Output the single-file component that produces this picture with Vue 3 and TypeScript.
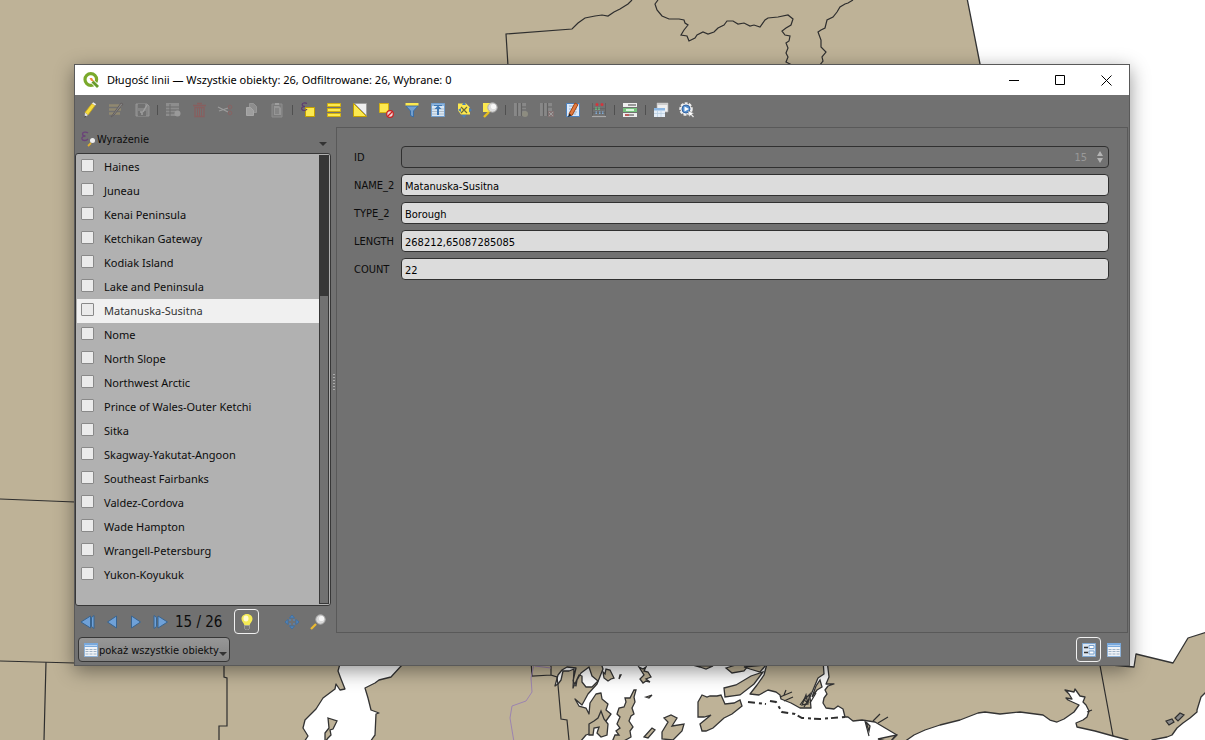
<script setup lang="ts">
import { ref } from 'vue'

interface Tool { name: string; art?: string; dim?: boolean }

const yellow = '#fce94f'
const art: Record<string, string> = {
  pencil: `<path d="M3 10.5 10 1.5l3 2L6 13z" fill="#f5dc3c" stroke="#c9a61c" stroke-width=".8"/><path d="M10 1.5 11.2.3l3 1.9L13 3.5z" fill="#eee"/><path d="M3 10.5 6 13l-3.5 2.6z" fill="#ddd"/><path d="m2.8 13.5-.6 2.3 2-1z" fill="#333"/>`,
  multi: `<path d="M1 3.500h13M1 7.500h12M1 11.500h11" stroke="#b0a070" stroke-width="2.500"/><path d="M3 15 13 1l2 1L6 13z" fill="#999" stroke="#594f4f"/>`,
  save: `<path d="M2 2h11l2 2v10H2z" fill="#999" stroke="#bbb"/><path d="M4 2h7v4H4zM4 9h8v5H4z" fill="#717171"/><path d="M6 10h2v3M9 10l4-7" stroke="#ccc" stroke-width="1.500" fill="none"/>`,
  addrow: `<path d="M1 1h13v13H1z" fill="#aaa"/><path d="M1 5h13M1 8h13M1 11h13M5 2v12" stroke="#666"/><circle cx="12.500" cy="11.500" r="3" fill="#c4c4c4"/>`,
  trash: `<path d="M2 3.500h13M6 1.500h5" stroke="#9d4f4f" stroke-width="1.600"/><path d="M4 5.500h9v9H4z" fill="none" stroke="#9d4f4f" stroke-width="1.300"/><path d="M6.500 6v8M8.500 6v8M10.500 6v8" stroke="#9d4f4f"/>`,
  cut: `<path d="M1 5l10 5M2 9l9-3" stroke="#c5c5c5" stroke-width="1.300"/><circle cx="13" cy="5" r="1.800" fill="none" stroke="#a05555"/><circle cx="13" cy="11" r="1.800" fill="none" stroke="#a05555"/>`,
  copy: `<path d="M6.500 1.500h4l3 3v6h-7z" fill="#aaa" stroke="#bbb"/><path d="M3.500 5.500h4l3 3v5h-7z" fill="#ccc" stroke="#ddd"/>`,
  paste: `<path d="M3 2h10v13H3z" fill="#888" stroke="#aaa"/><path d="M5 4h5l2 2v7H5z" fill="#bbb"/><path d="M6 1h4v2H6z" fill="#ccc"/><path d="M6 7h4M6 9h4M6 11h4" stroke="#777"/>`,
  expr: `<path d="M5.500 5.500h9v9h-9z" fill="${yellow}" stroke="#c4a000"/><path d="M7 1.500C5 .3 2 1 2.200 2.800 2.300 4 4 4.500 5 4.500 3 4.500 1.300 5.500 1.700 7 2.300 9 6 9 7 7" fill="none" stroke="#5d3b72" stroke-width="1.200"/>`,
  all: `<path d="M1.500 1.500h13v3h-13zM1.500 6.500h13v3h-13zM1.500 11.500h13v3h-13z" fill="${yellow}" stroke="#d2b010"/>`,
  invert: `<path d="M1.500 1.500v13h13z" fill="${yellow}" stroke="#c4a000"/><path d="M2.500 1.500h12v12z" fill="#eee" stroke="#999" stroke-width=".8"/>`,
  deselect: `<path d="M1.500 1.500h9v9h-9z" fill="${yellow}" stroke="#d2b010"/><circle cx="12" cy="12" r="3.300" fill="#f0d8d8" stroke="#cc1f1f" stroke-width="1.200"/><path d="m10 14 4-4" stroke="#cc1f1f" stroke-width="1.200"/>`,
  filter: `<path d="M2 4h12L9.500 9v6l-3-1.500V9z" fill="#729fcf" stroke="#3b6ea5"/><path d="M1.500 1h13v2.500h-13z" fill="${yellow}"/>`,
  top: `<path d="M1.500 1.500h13v13h-13z" fill="#d9e8f6" stroke="#729fcf"/><path d="M2 2h12v2H2z" fill="#8fb6de"/><path d="M2 7h12M2 9.500h12M2 12h12" stroke="#b3bec9"/><path d="M8 3.500 4.500 7H7v6h2V7h2.500z" fill="#3f78b4"/><path d="M4 3.500h8" stroke="#3f78b4"/>`,
  pan: `<path d="M2 1.500h8l4 4v7H5l-3-4z" fill="${yellow}"/><path d="m8 0 2 3H6zM8 16l2.500-3h-5zM2 8l3-2v4zM16 8l-3-2.500v5z" fill="#4d7fb5"/><path d="m5 5 6 6M11 5l-6 6" stroke="#6b6a38" stroke-width="1.200"/>`,
  zoom: `<path d="M1 1h8v9H1z" fill="${yellow}"/><path d="m2 15 5-5" stroke="#e6bf20" stroke-width="2.400"/><circle cx="10.500" cy="5.500" r="4.700" fill="#dedede" stroke="#aaa"/><circle cx="11.500" cy="4.500" r="2.600" fill="#f7f7f7"/>`,
  newcol: `<path d="M1 1h12v13H1z" fill="#a0a0a0"/><path d="M4.500 1v13M8.500 1v13M9 5h4M9 8h4" stroke="#555" stroke-width="1.200"/><circle cx="12" cy="12" r="3" fill="#a9a890"/>`,
  delcol: `<path d="M1 1h12v13H1z" fill="#a0a0a0"/><path d="M4.500 1v13M8.500 1v13M9 5h4" stroke="#555" stroke-width="1.200"/><path d="M9 9h6v6H9z" fill="#957777"/><path d="m10 10 4 4M14 10l-4 4" stroke="#ccc"/>`,
  calc: `<path d="M1.500 1.500h13v13h-13z" fill="#dceafa" stroke="#4a80bd"/><path d="M4 4h7M4 7h8M4 10h8M4 12h7" stroke="#93afd0"/><path d="M4 12 10 1l3 1.500-6 11z" fill="#e27a3f" stroke="#a14513"/><path d="m3 15 1-3.500 2.500 2z" fill="#222"/>`,
  abacus: `<path d="M1.500 1v14M14.500 1v14" stroke="#606060"/><path d="M1 14.500h14" stroke="#aaa" stroke-width="1.200"/><circle cx="6" cy="2.500" r="1.500" fill="#d5343c"/><circle cx="11" cy="2.500" r="1.500" fill="#d5343c"/><path d="M4 5.500h2V8H4zM7 5.500h2V8H7z" fill="#6cbd82"/><path d="M4.500 9.500h1.500V12H4.500zM8 9.500h1.500V12H8zM11 9.500h1.500V12H11z" fill="#85b5e5"/><path d="M2 6.700h12M2 10.700h12" stroke="#555" stroke-width=".5"/>`,
  conditional: `<path d="M1 1h14v4H1zM1 6h14v4H1zM1 11h14v4H1z" fill="#eee"/><path d="M1 6h14v4H1z" fill="#78c27e"/><path d="M6 3h8M3 13h9" stroke="#444"/><path d="M4 8h8" stroke="#d9f5dc" stroke-width="2"/><path d="M3 13h4" stroke="#d22"/>`,
  dock: `<path d="M4 1h11v9H4z" fill="#eee" stroke="#aaa" stroke-width=".7"/><path d="M4 1h11v2H4z" fill="#ccc"/><path d="M1 6h11v9H1z" fill="#e5eef8"/><path d="M1 6h11v2.500H1z" fill="#8db8e4"/><path d="M1 11.500h11M4.500 9v6M8 9v6" stroke="#b5cbe0" stroke-width=".7"/>`,
  actions: `<circle cx="7" cy="7" r="5.500" fill="#dedede" stroke="#eee" stroke-width="2.500" stroke-dasharray="2.800 1.200"/><circle cx="7" cy="7" r="4" fill="#5590cf" stroke="#3464a4"/><path d="M5.500 4.500v5L10 7z" fill="#fff"/><path d="m9 9 1.500 6 1.300-2 2.200 2.500 1-1-2.200-2.300 2.200-1z" fill="#fff" stroke="#777" stroke-width=".4"/>`,
  bulb: `<path d="M8 0C4.500 0 2.500 2.400 2.500 5c0 2.500 2.500 4 3 6.500h5c.5-2.500 3-4 3-6.500 0-2.600-2-5-5.500-5z" fill="#f4ea55"/><ellipse cx="7" cy="4.500" rx="2.500" ry="3" fill="#fffbd0"/><path d="M5.500 11.500h5v3l-1.500 1.500H7l-1.500-1.500z" fill="#777" stroke="#aaa" stroke-width=".7"/>`,
  move: `<path d="m8 1 2.500 3h-5zM8 15l2.500-3h-5zM1 8l3-2.500v5zM15 8l-3-2.500v5z" fill="#5588be" stroke="#416f9f"/><path d="M5 5h2v2H5zM9 5h2v2H9zM5 9h2v2H5zM9 9h2v2H9z" fill="#5e7da0"/>`,
  lens: `<path d="m1 15 5-5" stroke="#e9b932" stroke-width="2.300"/><circle cx="10.500" cy="5.500" r="4.700" fill="#d9d9d9" stroke="#aaa"/><circle cx="11.500" cy="4.500" r="2.600" fill="#f5f5f5"/>`,
  table: `<path d="M1.500 1.500h13v13h-13z" fill="#f0f3f7" stroke="#8fb3d9"/><path d="M1 1h14v4H1z" fill="#79a9dd"/><path d="M2 3.500h12" stroke="#b9d3ef"/><path d="M2.500 7.500h3M6.500 7.500h3M10.500 7.500h3M2.500 9.500h3M6.500 9.500h3M10.500 9.500h3M2.500 12h3M6.500 12h3M10.500 12h3" stroke="#9fb2c6"/>`,
  form: `<path d="M1.500 1.500h13v13h-13z" fill="#dce6f1" stroke="#7fa8d3"/><path d="M3 5.500h4M3 10.500h4" stroke="#333" stroke-width="1.300"/><path d="M8 3.500h5v3H8zM8 9h5v3H8z" fill="#fff" stroke="#79a1cd"/>`,
  first: `<path d="M10.500 2v12L1 8z" fill="#6fa1d8" stroke="#39648f"/><path d="M14 1.500v13l-2.500-2v-9z" fill="#6fa1d8" stroke="#39648f"/>`,
  prev: `<path d="M12.500 2v12L3.500 8z" fill="#6fa1d8" stroke="#39648f"/>`,
  next: `<path d="M3.500 2v12l9-6z" fill="#6fa1d8" stroke="#39648f"/>`,
  last: `<path d="M6 2v12l9.500-6z" fill="#6fa1d8" stroke="#39648f"/><path d="M2 1.500v13l2.500-2v-9z" fill="#6fa1d8" stroke="#39648f"/>`,
}

const tools: Tool[] = [
  { name: 'Edycja', art: 'pencil' }, { name: 'Multiedycja', art: 'multi', dim: true }, { name: 'Zapisz', art: 'save', dim: true },
  { name: '|' },
  { name: 'Dodaj obiekt', art: 'addrow', dim: true }, { name: 'Usuń', art: 'trash', dim: true }, { name: 'Wytnij', art: 'cut', dim: true }, { name: 'Kopiuj', art: 'copy', dim: true }, { name: 'Wklej', art: 'paste', dim: true },
  { name: '|' },
  { name: 'Wybierz wyrażeniem', art: 'expr' }, { name: 'Zaznacz wszystko', art: 'all' }, { name: 'Odwróć wybór', art: 'invert' }, { name: 'Odznacz', art: 'deselect' }, { name: 'Filtruj', art: 'filter' }, { name: 'Przenieś na górę', art: 'top' }, { name: 'Przesuń mapę', art: 'pan' }, { name: 'Powiększ', art: 'zoom' },
  { name: '|' },
  { name: 'Nowe pole', art: 'newcol', dim: true }, { name: 'Usuń pole', art: 'delcol', dim: true }, { name: 'Kalkulator pól', art: 'calc' }, { name: 'Statystyki', art: 'abacus' },
  { name: '|' },
  { name: 'Formatowanie warunkowe', art: 'conditional' },
  { name: '|' },
  { name: 'Zadokuj', art: 'dock' }, { name: 'Akcje', art: 'actions' },
]

const boroughs = ['Haines', 'Juneau', 'Kenai Peninsula', 'Ketchikan Gateway', 'Kodiak Island', 'Lake and Peninsula', 'Matanuska-Susitna', 'Nome', 'North Slope', 'Northwest Arctic', 'Prince of Wales-Outer Ketchi', 'Sitka', 'Skagway-Yakutat-Angoon', 'Southeast Fairbanks', 'Valdez-Cordova', 'Wade Hampton', 'Wrangell-Petersburg', 'Yukon-Koyukuk']
const current = ref('Matanuska-Susitna')
const fields = ref([
  { label: 'NAME_2', value: 'Matanuska-Susitna' },
  { label: 'TYPE_2', value: 'Borough' },
  { label: 'LENGTH', value: '268212,65087285085' },
  { label: 'COUNT', value: '22' },
])
const nav = [['Pierwszy', 'first'], ['Poprzedni', 'prev'], ['Następny', 'next'], ['Ostatni', 'last']]
</script>

<template>
  <main class="desktop">
    <svg class="map" viewBox="0 0 1205 740" preserveAspectRatio="xMidYMid slice" aria-hidden="true">
      <g class="sea">
        <path d="M967-2 980 64 1100 664 1134 667 1136 654 1173 663 1188 638 1207 632V-2z" />
        <path d="M341 660 338 671 341 679 345 689 340 690 336 684 335 689 323 698 316 709 305 720 303 728 308 736 304 742H370L375 735 376 714 379 713 371 710 368 698 365 688 375 683 379 680 391 677 402 665V660z" />
        <path d="M600 660 603 669 597 684 588 694 582 705 575 699 579 706 586 708 589 714 590 703 596 694 601 693 602 699 608 704 606 710 611 714 606 721 600 718 597 723 590 726 592 733 586 735 580 742H890L897 735 875 722 862 720 853 721 848 717 845 717 843 709 838 706 834 709 826 708 823 703 824 698 827 694 825 690 828 686 834 684 826 684 829 677 827 660H823L824 674 818 678 813 690 810 697 811 708 800 708 791 703 781 699 780 695 776 692 768 690 759 695 750 694 757 685 764 675 768 660z" />
        <path d="M558 675 562 670 567 667 576 668 573 681 576 686 577 680 581 673 589 667 592 676 598 681 592 687 586 687 582 682 582 676 579 675 573 688 574 669 569 671 563 671 561 680 558 684 555 686z" />
        <path d="M904 742 914 735 925 730 940 725 960 720 978 713 985 712 1000 714 1020 712 1043 715 1050 720 1057 722 1064 719 1074 712 1079 705 1068 700 1066 698 1072 699 1069 694 1065 690 1074 692 1075 689 1080 696 1085 697 1083 702 1086 705 1089 711 1087 717 1083 720 1076 723 1077 727 1095 731 1113 736 1128 740V742z" />
        <path d="M1207 691 1201 697 1197 710 1197 712 1190 718 1183 723 1177 728 1172 735 1167 737 1152 740V742H1207z" />
      </g>
      <g class="isle">
        <path d="M328 718 337 721 333 729 330 730 331 735 328 738 325 742 325 733 329 728z" />
        <path d="M603 672 605 674 606 669 610 670 612 674 614 678 611 679 608 681 604 678zM620 675 621 675 619 679zM639 667 643 669 646 667 644 671 648 672 651 677 646 679 650 682 646 681 643 683 640 679 644 675zM693 665 713 666 706 669 700 667z" />
        <path d="M726 668 736 665 749 665 744 671 732 673zM744 667 766 665 760 672 750 669zM724 688 736 685 751 676 763 672 754 684 740 695 725 697zM698 702 702 695 707 697 710 696 717 696 721 695 725 704 734 703 740 700 742 706 732 714 724 718 713 728 706 731 702 731 700 724 711 715 704 717 698 717z" />
        <path d="M634 690 636 690 634 697 635 702 632 708 634 714 631 716 629 721 633 727 630 731 631 737 622 742H612L615 735 619 735 616 731 620 728 617 724 620 717 617 714 619 708 624 707 626 702 625 698 630 698zM644 737 652 728 655 730 648 738zM662 732 668 722 664 718 671 715 677 718 672 726 684 724 682 731 673 740 662 739zM646 697 652 695 649 698z" />
        <path d="M589 724 594 721 598 718 601 711 604 719 608 724 607 735 601 737 597 733 599 727 594 728 593 735 589 735z" />
        <path d="M812 697 816 686 820 680 822 687 817 690zM802 705 806 695 808 704zM804 700 810 694 808 703zM866 722 870 726 869 731zM878 739 896 735 890 742z" />
      </g>
      <g class="border">
        <path d="M632 0 628 4 620 9 614 12 608 16 602 15 595 16 585 18 578 23 572 29 506 34 508 66" />
        <path d="M658 0 655 4 657 10 662 16 669 19 679 19 684 20 685 23 688 25 684 30 681 35 687 36 689 41 695 38 697 35 703 32 708 34 714 32 718 28 724 25 727 21 733 21 738 24 744 23 750 26 754 25 760 27 765 20 768 18 778 17 788 15 793 19 791 25 786 28 782 31 785 35 790 36 789 41 786 43 788 48 786 53 788 57 786 62 792 65" />
        <path d="M853 0 848 3 845 4 840 7 837 12 833 17 827 20 825 28 821 30 818 32 821 40 821 47 826 52 822 57 823 61 819 66" />
        <path d="M0 499 75 502M0 661 75 663M46 662 44 740M224 660V677L227 678V726H219V740M531 660 532 676 551 675M551 660V675L557 677 558 685 561 719 567 720 569 740M1099 660 1113 736" />
        <path class="dashes" d="M748 702 766 704M770 701 776 702 782 712 795 714 802 718 820 719 845 717" />
        <path d="M780 697 792 692M784 701 793 697M784 695 786 690M873 721 880 714M878 723 888 717M1087 712 1092 710M865 721 869 736M810 703 816 693M800 705 805 698M804 707 809 699" />
        <path class="lake" d="M1166 721 1172 719 1174 722 1169 725zM1175 718 1180 713 1184 715 1178 721z" />
      </g>
      <path class="river" d="M535 660 531 678 532 692 526 701 512 706 510 718 514 742M535 666 551 668" />
    </svg>

    <section class="window">
      <header class="titlebar">
        <svg class="logo" viewBox="0 0 16 16" aria-hidden="true">
          <circle cx="7.800" cy="7.500" r="5.800" fill="none" stroke="#7aa92b" stroke-width="3.200" />
          <path d="m10 10 5 5" stroke="#fff" stroke-width="4.500" /><path d="m9.500 9.500 5.500 5.500" stroke="#679a29" stroke-width="2.800" />
          <path d="M6.500 6h2.500l2 3.500-3-.8z" fill="#f28a35" />
        </svg>
        <h1>Długość linii — Wszystkie obiekty: 26, Odfiltrowane: 26, Wybrane: 0</h1>
        <button class="caption" aria-label="Minimalizuj"><svg viewBox="0 0 11 11"><path d="M0 5.500h10" /></svg></button>
        <button class="caption" aria-label="Maksymalizuj"><svg viewBox="0 0 11 11"><path d="M.5.500h9v9h-9z" /></svg></button>
        <button class="caption" aria-label="Zamknij"><svg viewBox="0 0 11 11"><path d="m.5.500 10 10M10.500.500l-10 10" /></svg></button>
      </header>

      <div class="toolbar" role="toolbar">
        <template v-for="(t, i) in tools" :key="i">
          <button v-if="t.art" class="tool" :class="{ dim: t.dim }" :aria-label="t.name" :disabled="t.dim">
            <svg class="icon" viewBox="0 0 16 16" v-html="art[t.art]" />
          </button>
          <span v-else class="divider" />
        </template>
      </div>

      <div class="body">
        <aside class="side">
          <button class="expression">
            <svg class="icon" viewBox="0 0 16 16" aria-hidden="true">
              <path d="M7 2C5 .5 1.500 1 1.500 3c0 1.500 1.500 2 3 2C2.500 5 .5 6 1 8c.6 2 4.500 2 6 0" fill="none" stroke="#6b4379" stroke-width="1.300" />
              <path d="m7 15 3-3" stroke="#e0b030" stroke-width="1.800" /><circle cx="11.500" cy="9.500" r="2.500" fill="#eee" />
            </svg>
            <span>Wyrażenie</span>
            <i class="caret" />
          </button>
          <div class="listbox">
            <ul>
              <li v-for="b in boroughs" :key="b" :class="{ on: b === current }" @click="current = b">
                <label><input type="checkbox" @click.stop /><span>{{ b }}</span></label>
              </li>
            </ul>
            <div class="scroll"><div class="thumb" /></div>
          </div>
          <div class="nav">
            <button v-for="n in nav" :key="n[0]" class="step" :aria-label="n[0]"><svg class="icon" viewBox="0 0 16 16" v-html="art[n[1]]" /></button>
            <output>15 / 26</output>
            <button class="framed" aria-label="Podświetl"><svg class="icon" viewBox="0 0 16 16" v-html="art.bulb" /></button>
            <span class="gap" />
            <button class="tool" aria-label="Przesuń"><svg class="icon" viewBox="0 0 16 16" v-html="art.move" /></button>
            <button class="tool" aria-label="Powiększ"><svg class="icon" viewBox="0 0 16 16" v-html="art.lens" /></button>
          </div>
        </aside>
        <div class="splitter"><i v-for="n in 6" :key="n" /></div>
        <form class="form" @submit.prevent>
          <label for="f-id">ID</label>
          <div class="spin">
            <input id="f-id" type="text" value="15" disabled />
            <svg viewBox="0 0 6 12" aria-hidden="true"><path d="M3 0 6 5H0zM3 12 0 7h6z" fill="#b4b4b4" /></svg>
          </div>
          <template v-for="f in fields" :key="f.label">
            <label :for="f.label">{{ f.label }}</label>
            <input :id="f.label" v-model="f.value" class="field" type="text" />
          </template>
        </form>
      </div>

      <footer class="foot">
        <button class="filter">
          <svg class="icon" viewBox="0 0 16 16" v-html="art.table" />
          <span>pokaż wszystkie obiekty</span><i class="caret" />
        </button>
        <span class="gap" />
        <button class="framed" aria-label="Widok formularza"><svg class="icon" viewBox="0 0 16 16" v-html="art.form" /></button>
        <button class="framed plain" aria-label="Widok tabeli"><svg class="icon" viewBox="0 0 16 16" v-html="art.table" /></button>
      </footer>
    </section>
  </main>
</template>

<style>
body { overflow: hidden; }
</style>

<style scoped>
* { box-sizing: border-box; }
.desktop { position: relative; height: 100vh; background: #beb297; font: 11px/14px "DejaVu Sans Condensed", "Noto Sans", sans-serif; color: #0c0c0c; }
.map { display: block; width: 100%; height: 100%; }
.sea { fill: #fff; stroke: #333; stroke-width: 1.3; stroke-linejoin: round; }
.isle { fill: #beb297; stroke: #333; stroke-width: 1.3; }
.border { fill: none; stroke: #2e2e2e; stroke-width: 1.2; }
.border .dashes { stroke-width: 2; stroke-dasharray: 7 4 3 3; }
.border .lake { fill: #888; }
.river { fill: none; stroke: #9c84b0; }
button { margin: 0; padding: 0; border: 0; background: none; font: inherit; color: inherit; }
.icon { display: block; width: 16px; height: 16px; flex: none; }
.gap { flex: 1; }
.window { position: absolute; inset: 64px 75px 74px 74px; display: flex; flex-direction: column; background: #717171; border: 1px solid #595959; box-shadow: 0 5px 18px rgba(0, 0, 0, .42); }
.titlebar { display: flex; align-items: center; height: 30px; padding-left: 8px; background: #fff; }
.logo { width: 16px; height: 16px; margin-right: 8px; }
h1 { flex: 1; margin: 0; font: 11px/16px "Noto Sans", sans-serif; color: #000; white-space: nowrap; }
.caption { width: 46px; height: 30px; display: grid; place-items: center; }
.caption svg { width: 11px; height: 11px; fill: none; stroke: #000; }
.toolbar { display: flex; align-items: center; height: 32px; padding: 0 2px 2px; }
.tool { display: grid; place-items: center; width: 26px; height: 26px; }
.dim .icon { opacity: .5; }
.divider { width: 1px; height: 10px; margin: 0 2px; background: #505050; }
.body { flex: 1; display: flex; min-height: 0; }
.side { width: 256px; display: flex; flex-direction: column; }
.expression { display: flex; align-items: center; height: 26px; padding: 0 4px 2px 6px; text-align: left; }
.expression span { flex: 1; padding-top: 2px; }
.caret { width: 0; height: 0; border: 4px solid transparent; border-top-color: #333; border-bottom: 0; }
.expression .caret { margin-top: 10px; }
.listbox { flex: 1; display: flex; min-height: 0; padding: 1px; border: 1px solid #373737; border-radius: 3px; background: #b1b1b1; }
ul { flex: 1; margin: 0; padding: 0; list-style: none; overflow: hidden; }
li { height: 24px; font: 11px/24px "Noto Sans", sans-serif; white-space: nowrap; }
li.on { background: #f0f0f0; color: #333; }
li label { display: flex; align-items: flex-start; }
li input { appearance: none; width: 13px; height: 13px; margin: 4px 10px 0 4px; border: 1px solid #898989; background: #ebebeb; border-radius: 1px; }
.scroll { width: 10px; padding-top: 140px; background: #373737; }
.thumb { height: 100%; border: 1px solid #373737; background: #717171; }
.nav { display: flex; align-items: center; height: 31px; padding-left: 1px; }
.step { width: 24px; height: 24px; display: grid; place-items: center; }
output { width: 56px; padding-left: 3px; font: 15px/20px "DejaVu Sans Condensed", "Noto Sans", sans-serif; white-space: nowrap; }
.nav .framed { margin-left: 6px; }
.framed { width: 25px; height: 25px; display: grid; place-items: center; border: 1px solid #f0f0f0; border-radius: 4px; }
.framed.plain { border-color: transparent; }
.splitter { width: 5px; display: flex; flex-direction: column; align-items: center; justify-content: center; gap: 2px; }
.splitter i { width: 2px; height: 1px; background: #aaa; }
.form { flex: 1; min-width: 0; margin: 0 1px 4px 0; padding: 18px 18px 18px 17px; border: 1px solid #595959; display: grid; grid-template-columns: 41px 1fr; grid-auto-rows: 22px; gap: 6px; align-items: center; align-content: start; }
.form label { padding-top: 2px; white-space: nowrap; }
.field, .spin { width: 100%; height: 22px; border: 1px solid #303030; border-radius: 4px; }
.field { padding: 2px 3px 0; background: #dcdcdc; color: #000; font: inherit; }
.spin { display: flex; align-items: center; padding-right: 5px; }
.spin input { flex: 1; min-width: 0; margin-right: 10px; padding: 2px 0 0; border: 0; background: none; color: #999; font: inherit; text-align: right; }
.spin svg { width: 6px; height: 12px; }
.foot { display: flex; align-items: flex-start; height: 28px; padding: 0 3px; }
.filter { display: flex; align-items: center; height: 25px; padding: 0 2px 0 4px; border: 1px solid #373737; border-radius: 4px; background: linear-gradient(#979797, #828282); white-space: nowrap; }
.filter span { padding-top: 2px; }
.filter .caret { margin-top: 9px; }
</style>
